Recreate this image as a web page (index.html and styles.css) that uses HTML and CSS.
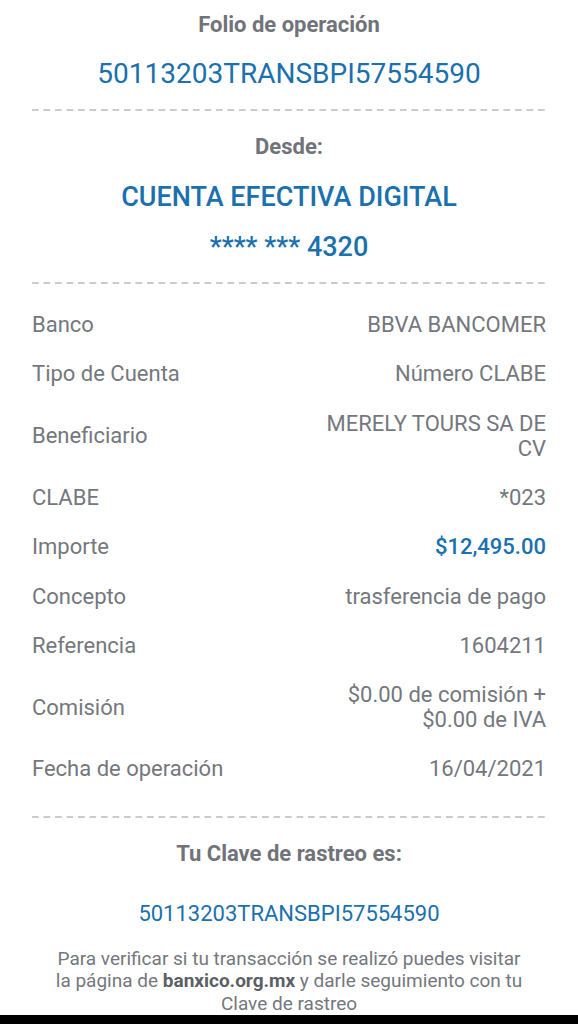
FILE: index.html
```html
<!DOCTYPE html>
<html>
<head>
    <title>Comprobante de transferencia</title>
    <link rel="stylesheet" href="styles.css">
</head>
<body>
    <div id="receipt">
        <div class="block">
            <p class="caption">Folio de operación</p>
            <p class="big-blue">50113203TRANSBPI57554590</p>
        </div>
        <hr class="dashed">
        <div class="block">
            <p class="caption">Desde:</p>
            <p class="big-blue account">CUENTA EFECTIVA DIGITAL</p>
            <p class="big-blue account">**** *** 4320</p>
        </div>
        <hr class="dashed">
        <div class="details">
            <div class="row"><span class="label">Banco</span><span class="value">BBVA BANCOMER</span></div>
            <div class="row"><span class="label">Tipo de Cuenta</span><span class="value">Número CLABE</span></div>
            <div class="row"><span class="label">Beneficiario</span><span class="value">MERELY TOURS SA DE CV</span></div>
            <div class="row"><span class="label">CLABE</span><span class="value">*023</span></div>
            <div class="row"><span class="label">Importe</span><span class="value amount">$12,495.00</span></div>
            <div class="row"><span class="label">Concepto</span><span class="value">trasferencia de pago</span></div>
            <div class="row"><span class="label">Referencia</span><span class="value">1604211</span></div>
            <div class="row"><span class="label">Comisión</span><span class="value">$0.00 de comisión + $0.00 de IVA</span></div>
            <div class="row"><span class="label">Fecha de operación</span><span class="value">16/04/2021</span></div>
        </div>
        <hr class="dashed">
        <div class="block tracking">
            <p class="caption">Tu Clave de rastreo es:</p>
            <p class="tracking-key">50113203TRANSBPI57554590</p>
            <p class="note">Para verificar si tu transacción se realizó puedes visitar la página de <b>banxico.org.mx</b> y darle seguimiento con tu Clave de rastreo</p>
        </div>
    </div>
    <div id="bottom-bar"></div>
</body>
</html>
```

FILE: styles.css
```css
body {
    margin: 0;
    background-color: #fff;
    font-family: Roboto, "Noto Sans", Arial, sans-serif;
    color: #74777d;
}

p {
    margin: 0;
}

#receipt {
    height: 1015px;
    overflow: hidden;
    padding: 0 32px;
    box-sizing: border-box;
}

.block {
    text-align: center;
}

.caption {
    font-size: 22px;
    font-weight: 700;
    line-height: 26px;
    padding-top: 12px;
    color: #707379;
}

.big-blue {
    color: #1b70ae;
    font-size: 28px;
    line-height: 34px;
    margin-top: 19px;
}

.account {
    font-weight: 500;
    font-size: 27px;
    margin-top: 16px;
}

.caption + .account {
    margin-top: 20px;
}

.dashed {
    border: 0;
    height: 2px;
    margin: 18px 0 11px;
    background-image: linear-gradient(to right, #c9cbce 55%, transparent 55%);
    background-size: 11.5px 2px;
}

.details {
    padding: 5px 0 4px;
}

.row {
    display: grid;
    grid-template-columns: 1fr 240px;
    align-items: center;
    padding: 12.15px 0;
    font-size: 22px;
    line-height: 25px;
}

.value {
    text-align: right;
}

.amount {
    color: #1b70ae;
    font-weight: 500;
}

.tracking-key {
    color: #1b70ae;
    font-size: 22px;
    line-height: 28px;
    margin-top: 33px;
}

.note {
    font-size: 19px;
    line-height: 22.5px;
    max-width: 474px;
    margin: 20px auto 0;
}

.note b {
    color: #5c5f65;
}

#bottom-bar {
    height: 9px;
    background-color: #000;
}
```
